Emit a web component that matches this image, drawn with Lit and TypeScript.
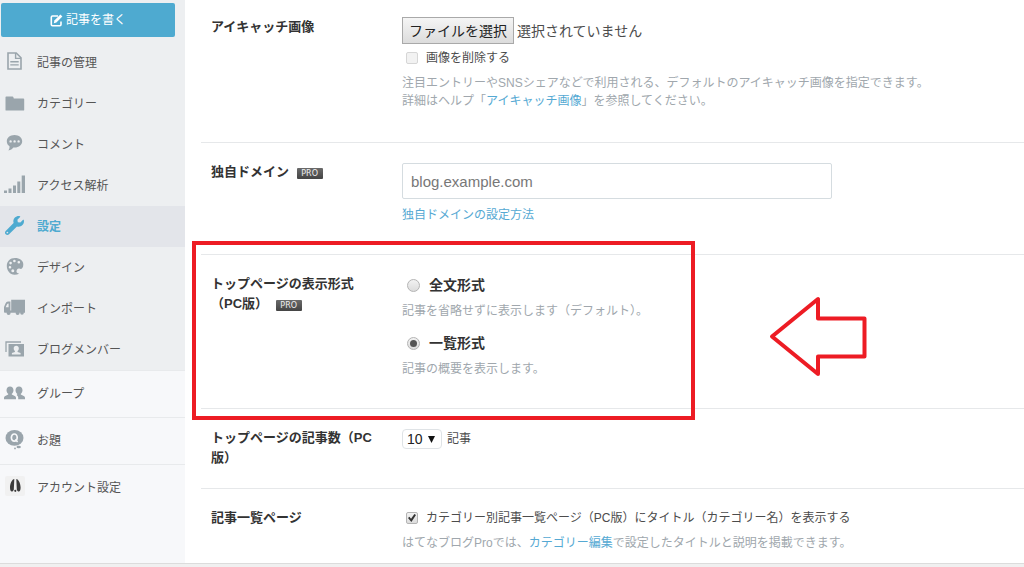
import { LitElement, html, svg, css } from "lit";
import { customElement, state } from "lit/decorators.js";
import { classMap } from "lit/directives/class-map.js";

const icons: Record<string, unknown> = {
  document: svg`<path d="M4 2h8.2L17 6.8V18H4z" fill="none" stroke="currentColor" stroke-width="1.6"/><path d="M11.6 2v5.4H17" fill="none" stroke="currentColor" stroke-width="1.4"/><path d="M6.3 10.8h8.4M6.3 13.9h8.4" stroke="currentColor" stroke-width="1.4"/>`,
  folder: svg`<path d="M1.5 5.3q0-.8.8-.8h6.2q.7 0 .9.7l.4 1.3h9.6q.8 0 .8.8V18q0 .6-.8.6H2.3q-.8 0-.8-.6z"/>`,
  comment: svg`<path fill-rule="evenodd" d="M10.500 2C6 2 2.800 4.800 2.800 8.300c0 2.200 1 3.900 2.700 5 .2 1.600-.3 3-1.100 4.200 2.300-.3 3.900-1.300 5-2.900h1.100c4.500 0 7.700-2.800 7.700-6.300S15 2 10.500 2zM6.600 7.200a1.200 1.200 0 1 1 0 2.400 1.200 1.200 0 0 1 0-2.400zm4 0a1.200 1.200 0 1 1 0 2.400 1.200 1.200 0 0 1 0-2.400zm4 0a1.200 1.200 0 1 1 0 2.400 1.200 1.200 0 0 1 0-2.400z"/>`,
  bars: svg`<path d="M0 16.500h3V19H0zM4.500 14.500h3V19h-3zM9 11.500h3V19H9zM13.300 7.500h3V19h-3zM17.700 1.500h3.300V19h-3.300z"/>`,
  wrench: svg`<path transform="translate(1 1) scale(.0371)" d="M507.730 109.100c-2.240-9.030-13.540-12.090-20.120-5.510l-74.360 74.360-67.880-11.310-11.310-67.880 74.360-74.360c6.620-6.620 3.430-17.900-5.660-20.160-47.380-11.740-99.550.910-136.580 37.930-39.640 39.640-50.550 97.100-34.050 147.200L18.740 402.760c-24.990 24.990-24.990 65.510 0 90.500 24.990 24.990 65.510 24.990 90.500 0l213.210-213.210c50.120 16.710 107.470 5.680 147.370-34.220 37.070-37.070 49.700-89.320 37.910-136.730zM64 472c-13.250 0-24-10.750-24-24 0-13.260 10.750-24 24-24s24 10.740 24 24c0 13.250-10.750 24-24 24z"/>`,
  palette: svg`<path fill-rule="evenodd" d="M11 2C6 2 2.800 5.500 2.800 10s3.200 8.700 7.700 8.700c1.800 0 3.300-.3 4.600-1-.7-.2-1.600-.3-2.100-.9-.9-1-.4-2.300.1-3.200.6-1.100 1.700-1.200 2.900-.8 1.600.5 3.300-.9 3.300-4.300C19.300 4.600 15.700 2 11 2zM6 10a1.300 1.300 0 1 1 0 2.600A1.300 1.300 0 0 1 6 10zm.6-4.200a1.300 1.300 0 1 1 0 2.600 1.300 1.300 0 0 1 0-2.600zm3.800-2.100a1.300 1.300 0 1 1 0 2.600 1.300 1.300 0 0 1 0-2.600zm4.400 1.300a1.300 1.300 0 1 1 0 2.600 1.300 1.300 0 0 1 0-2.600zM8.800 13.200a1.500 1.500 0 1 1 0 3 1.500 1.500 0 0 1 0-3z"/>`,
  truck: svg`<path fill-rule="evenodd" d="M7.200 2.800H21V13.500H7.200zM6.400 4.500v9H21v2.200H.8q-.8 0-.8-1V10l1.500-3.600q.8-1.900 2.500-1.900zM4.600 6.500q-1.300 0-1.800 1.200L1.700 10.300h2.900z"/><circle cx="4.600" cy="16" r="2"/><circle cx="13.600" cy="16" r="2"/><circle cx="18" cy="16" r="1.800"/>`,
  members: svg`<path d="M2 14V4h15" fill="none" stroke="currentColor" stroke-width="1.300"/><path fill-rule="evenodd" d="M4.500 6H20v12.500H4.500zM12.200 7.800c-1.600 0-2.500 1.100-2.500 2.600 0 1.200.5 2 1.200 2.600v.9l-3 1.100v1.500h8.700V15l-3-1.100V13c.7-.6 1.200-1.400 1.200-2.600 0-1.500-1-2.600-2.600-2.600z"/>`,
  group: svg`<path d="M6 4.500c-2.100 0-3.500 1.500-3.500 3.700 0 1.600.7 2.800 1.700 3.500v.9L.800 14.200Q0 14.700 0 15.700v1.600h12v-1.600q0-1-.8-1.500l-3.400-1.600v-.9c1-.7 1.700-1.900 1.700-3.500C9.500 6 8.100 4.500 6 4.500z"/><path d="M15 4.500c-2.100 0-3.500 1.500-3.500 3.700 0 1.600.7 2.800 1.700 3.500v.9l-.6.400 1 .9q.6.600.6 1.600v1.800H21v-1.600q0-1-.8-1.500l-3.400-1.600v-.9c1-.7 1.700-1.900 1.700-3.500 0-2.200-1.400-3.700-3.500-3.700z"/>`,
  question: svg`<ellipse cx="10.500" cy="8.900" rx="9" ry="7.900"/><ellipse cx="14.700" cy="18" rx="2.200" ry="1.200"/><circle cx="11" cy="19.400" r=".9"/><ellipse cx="10.300" cy="8.600" rx="2.900" ry="3.600" fill="none" stroke="#f7f8fa" stroke-width="1.700"/><path d="M11.200 10.500l2.400 2.400" stroke="#f7f8fa" stroke-width="1.500"/>`,
  account: svg`<rect x="1" y="0" width="20" height="20" rx="2" fill="#f1f1f1"/><path fill="#3b3b3b" d="M10.300 3C8.200 3.200 6 7.500 6 11.500c0 2.500.7 4 1.800 4 .9 0 1.500-.7 2-1.800zM12.300 3c2.100.2 4.300 4.500 4.300 8.500 0 2.500-.7 4-1.800 4-.9 0-1.500-.7-2-1.800z"/><circle cx="11.300" cy="14.800" r="1.100" fill="#3b3b3b"/>`,
};

const icon = (name: string) =>
  html`<svg class="icon" viewBox="0 1 22 22" aria-hidden="true">${icons[name]}</svg>`;

@customElement("pro-badge")
class ProBadge extends LitElement {
  static styles = css`
    :host {
      display: inline-block;
      width: 26px;
      height: 11px;
      margin-left: 4px;
      border-radius: 1px;
      background: linear-gradient(#6a6a6a, #444);
      color: #eee;
      font: 8px/11px "DejaVu Sans", sans-serif;
      text-align: center;
    }
  `;
  render() {
    return html`PRO`;
  }
}

@customElement("side-nav")
class SideNav extends LitElement {
  @state() current = "設定";

  static styles = css`
    :host {
      display: block;
      background: #f7f8fa;
      color: #555;
      font-size: 12px;
    }
    .main {
      background: #edeff1;
      padding-top: 3px;
    }
    .write {
      display: flex;
      align-items: center;
      justify-content: center;
      gap: 3px;
      width: 174px;
      height: 34px;
      margin: 0 0 5px 1px;
      padding: 0;
      border: 0;
      border-radius: 2px;
      background: #4eaad0;
      color: #fff;
      font: inherit;
    }
    .pen {
      width: 13px;
      height: 13px;
    }
    .item {
      display: flex;
      align-items: center;
      gap: 11px;
      height: 41px;
      padding-left: 4px;
      color: inherit;
      text-decoration: none;
    }
    .icon {
      width: 22px;
      height: 22px;
      overflow: visible;
      color: #9aa5ac;
      fill: currentColor;
    }
    .current {
      background: #e3e5ea;
      color: #4eaad0;
      font-weight: bold;
    }
    .current .icon {
      color: #4eaad0;
    }
    .sub .item {
      height: 46px;
      border-top: 1px solid #e8eaec;
    }
  `;

  private item(name: string, label: string) {
    return html`<a
      href="#"
      class=${classMap({ item: true, current: label === this.current })}
      @click=${(e: Event) => {
        e.preventDefault();
        this.current = label;
      }}
      >${icon(name)}<span>${label}</span></a
    >`;
  }

  render() {
    return html`
      <nav>
        <div class="main">
          <button class="write" type="button">
            <svg class="pen" viewBox="0 0 13 13" aria-hidden="true">
              <path d="M8 2H2.500Q1.300 2 1.300 3.200v7.300q0 1.200 1.200 1.200h7.300q1.200 0 1.200-1.200V7.500" fill="none" stroke="#fff" stroke-width="1.600" />
              <path d="M10.400.600l2 2-6 6-2.600.600.600-2.600z" fill="#fff" />
            </svg>
            <span>記事を書く</span>
          </button>
          ${this.item("document", "記事の管理")} ${this.item("folder", "カテゴリー")}
          ${this.item("comment", "コメント")} ${this.item("bars", "アクセス解析")}
          ${this.item("wrench", "設定")} ${this.item("palette", "デザイン")}
          ${this.item("truck", "インポート")} ${this.item("members", "ブログメンバー")}
        </div>
        <div class="sub">
          ${this.item("group", "グループ")} ${this.item("question", "お題")}
          ${this.item("account", "アカウント設定")}
        </div>
      </nav>
    `;
  }
}

@customElement("app-root")
class AppRoot extends LitElement {
  static styles = css`
    :host {
      display: flex;
      flex-direction: column;
      min-height: 100vh;
      background: #fff;
      color: #4c4c4c;
      font: 12px/18px "Liberation Sans", "Noto Sans CJK JP", sans-serif;
    }
    .layout {
      display: grid;
      grid-template-columns: 185px minmax(0, 1fr);
      flex: 1;
    }
    .settings {
      padding-left: 16px;
    }
    .row {
      position: relative;
      display: grid;
      grid-template-columns: 170px minmax(0, 1fr);
      column-gap: 21px;
      padding-left: 10px;
      border-bottom: 1px solid #e6e8ea;
    }
    .row:last-child {
      border-bottom: 0;
    }
    .title {
      margin: 0;
      padding: 19px 0 20px;
      color: #333;
      font-size: 13px;
      line-height: 20px;
      font-weight: bold;
    }
    .body {
      padding: 20px 0 30px;
    }
    .row:first-child .title {
      padding-top: 17px;
    }
    .row:first-child .body {
      padding: 17px 0 32px;
    }
    .row:last-child .body {
      padding-bottom: 10px;
    }
    .file {
      display: flex;
      align-items: center;
      gap: 3px;
      margin-bottom: 5px;
      font-size: 14px;
    }
    .choose {
      height: 27px;
      padding: 0 6px;
      border: 1px solid #a9a9a9;
      border-radius: 0;
      background: linear-gradient(#f5f5f5, #dcdcdc);
      color: #222;
      font: inherit;
    }
    .option {
      display: flex;
      align-items: center;
      gap: 8px;
      padding-left: 4px;
    }
    .check,
    .radio {
      appearance: none;
      display: grid;
      place-items: center;
      flex: none;
      width: 12px;
      height: 12px;
      margin: 0;
      border: 1px solid #b4b4b4;
      border-radius: 2px;
      background: linear-gradient(#f2f2f2, #dcdcdc);
    }
    .check:disabled {
      border-color: #d6d6d6;
      background: #f2f2f2;
    }
    .check:checked::before {
      content: "";
      width: 8px;
      height: 8px;
      background: #333;
      clip-path: polygon(0 50%, 18% 35%, 38% 58%, 80% 0, 100% 14%, 42% 100%);
    }
    .radio {
      width: 13px;
      height: 13px;
      border-radius: 50%;
    }
    .radio:checked::before {
      content: "";
      width: 7px;
      height: 7px;
      border-radius: 50%;
      background: #555;
    }
    .format {
      gap: 9px;
      padding-left: 5px;
      color: #333;
      font-size: 14px;
      line-height: 20px;
      font-weight: bold;
    }
    .note {
      margin: 7px 0 0;
      color: #a0a7ad;
    }
    .note + .format {
      margin-top: 13px;
    }
    .link {
      color: #55a9d3;
      text-decoration: none;
    }
    .domain {
      box-sizing: border-box;
      display: block;
      width: 100%;
      max-width: 430px;
      height: 36px;
      padding: 0 8px;
      border: 1px solid #d5dce0;
      border-radius: 2px;
      background: #fff;
      color: #333;
      font: 15px "Liberation Sans", sans-serif;
    }
    .domain::placeholder {
      color: #777;
    }
    .amount {
      display: flex;
      align-items: center;
      gap: 5px;
    }
    .picker {
      display: grid;
      align-items: center;
    }
    .picker > * {
      grid-area: 1 / 1;
    }
    .count {
      appearance: none;
      width: 40px;
      height: 20px;
      padding: 0 0 0 4px;
      border: 1px solid #dfe3e6;
      border-radius: 4px;
      background: #fff;
      color: #222;
      font: 14px "Liberation Sans", sans-serif;
    }
    .arrow {
      justify-self: end;
      width: 7px;
      height: 7px;
      margin-right: 7px;
      pointer-events: none;
    }
    .frame {
      position: absolute;
      top: -14px;
      bottom: -12px;
      left: -9px;
      width: 503px;
      box-sizing: border-box;
      border: 4px solid #ed1c24;
      pointer-events: none;
    }
    .pointer {
      position: absolute;
      top: 41px;
      left: 567px;
      width: 100px;
      height: 82px;
      pointer-events: none;
    }
    .footer {
      height: 3px;
      border-top: 1px solid #dcdcdc;
      background: #f0f0f0;
    }
  `;

  private chooseFile() {
    this.renderRoot.querySelector<HTMLInputElement>("#eyecatch")?.click();
  }

  render() {
    return html`
      <div class="layout">
        <side-nav></side-nav>
        <main class="settings">
          <section class="row">
            <h2 class="title">アイキャッチ画像</h2>
            <div class="body">
              <div class="file">
                <button class="choose" type="button" @click=${this.chooseFile}>ファイルを選択</button>
                <input id="eyecatch" type="file" hidden />
                <span>選択されていません</span>
              </div>
              <label class="option"><input class="check" type="checkbox" disabled />画像を削除する</label>
              <p class="note">
                注目エントリーやSNSシェアなどで利用される、デフォルトのアイキャッチ画像を指定できます。<br />詳細はヘルプ「<a class="link" href="#">アイキャッチ画像</a>」を参照してください。
              </p>
            </div>
          </section>
          <section class="row">
            <h2 class="title"><label for="domain">独自ドメイン</label> <pro-badge></pro-badge></h2>
            <div class="body">
              <input class="domain" id="domain" type="text" placeholder="blog.example.com" />
              <p class="note"><a class="link" href="#">独自ドメインの設定方法</a></p>
            </div>
          </section>
          <section class="row">
            <h2 class="title">トップページの表示形式（PC版） <pro-badge></pro-badge></h2>
            <div class="body">
              <label class="option format"><input class="radio" type="radio" name="format" />全文形式</label>
              <p class="note">記事を省略せずに表示します（デフォルト）。</p>
              <label class="option format"><input class="radio" type="radio" name="format" checked />一覧形式</label>
              <p class="note">記事の概要を表示します。</p>
            </div>
            <div class="frame"></div>
            <svg class="pointer" viewBox="0 0 100 82" aria-hidden="true">
              <path d="M4 40.500L50 3v19.500h46.500v38H50V78z" fill="none" stroke="#ed1c24" stroke-width="4" stroke-linejoin="round" />
            </svg>
          </section>
          <section class="row">
            <h2 class="title"><label for="count">トップページの記事数（PC版）</label></h2>
            <div class="body">
              <div class="amount">
                <span class="picker">
                  <select class="count" id="count"><option>10</option></select>
                  <svg class="arrow" viewBox="0 0 7 7" aria-hidden="true"><path d="M0 0h7L3.500 7z" fill="#111" /></svg>
                </span>
                <span>記事</span>
              </div>
            </div>
          </section>
          <section class="row">
            <h2 class="title">記事一覧ページ</h2>
            <div class="body">
              <label class="option"><input class="check" type="checkbox" checked />カテゴリー別記事一覧ページ（PC版）にタイトル（カテゴリー名）を表示する</label>
              <p class="note">はてなブログProでは、<a class="link" href="#">カテゴリー編集</a>で設定したタイトルと説明を掲載できます。</p>
            </div>
          </section>
        </main>
      </div>
      <footer class="footer"></footer>
    `;
  }
}
